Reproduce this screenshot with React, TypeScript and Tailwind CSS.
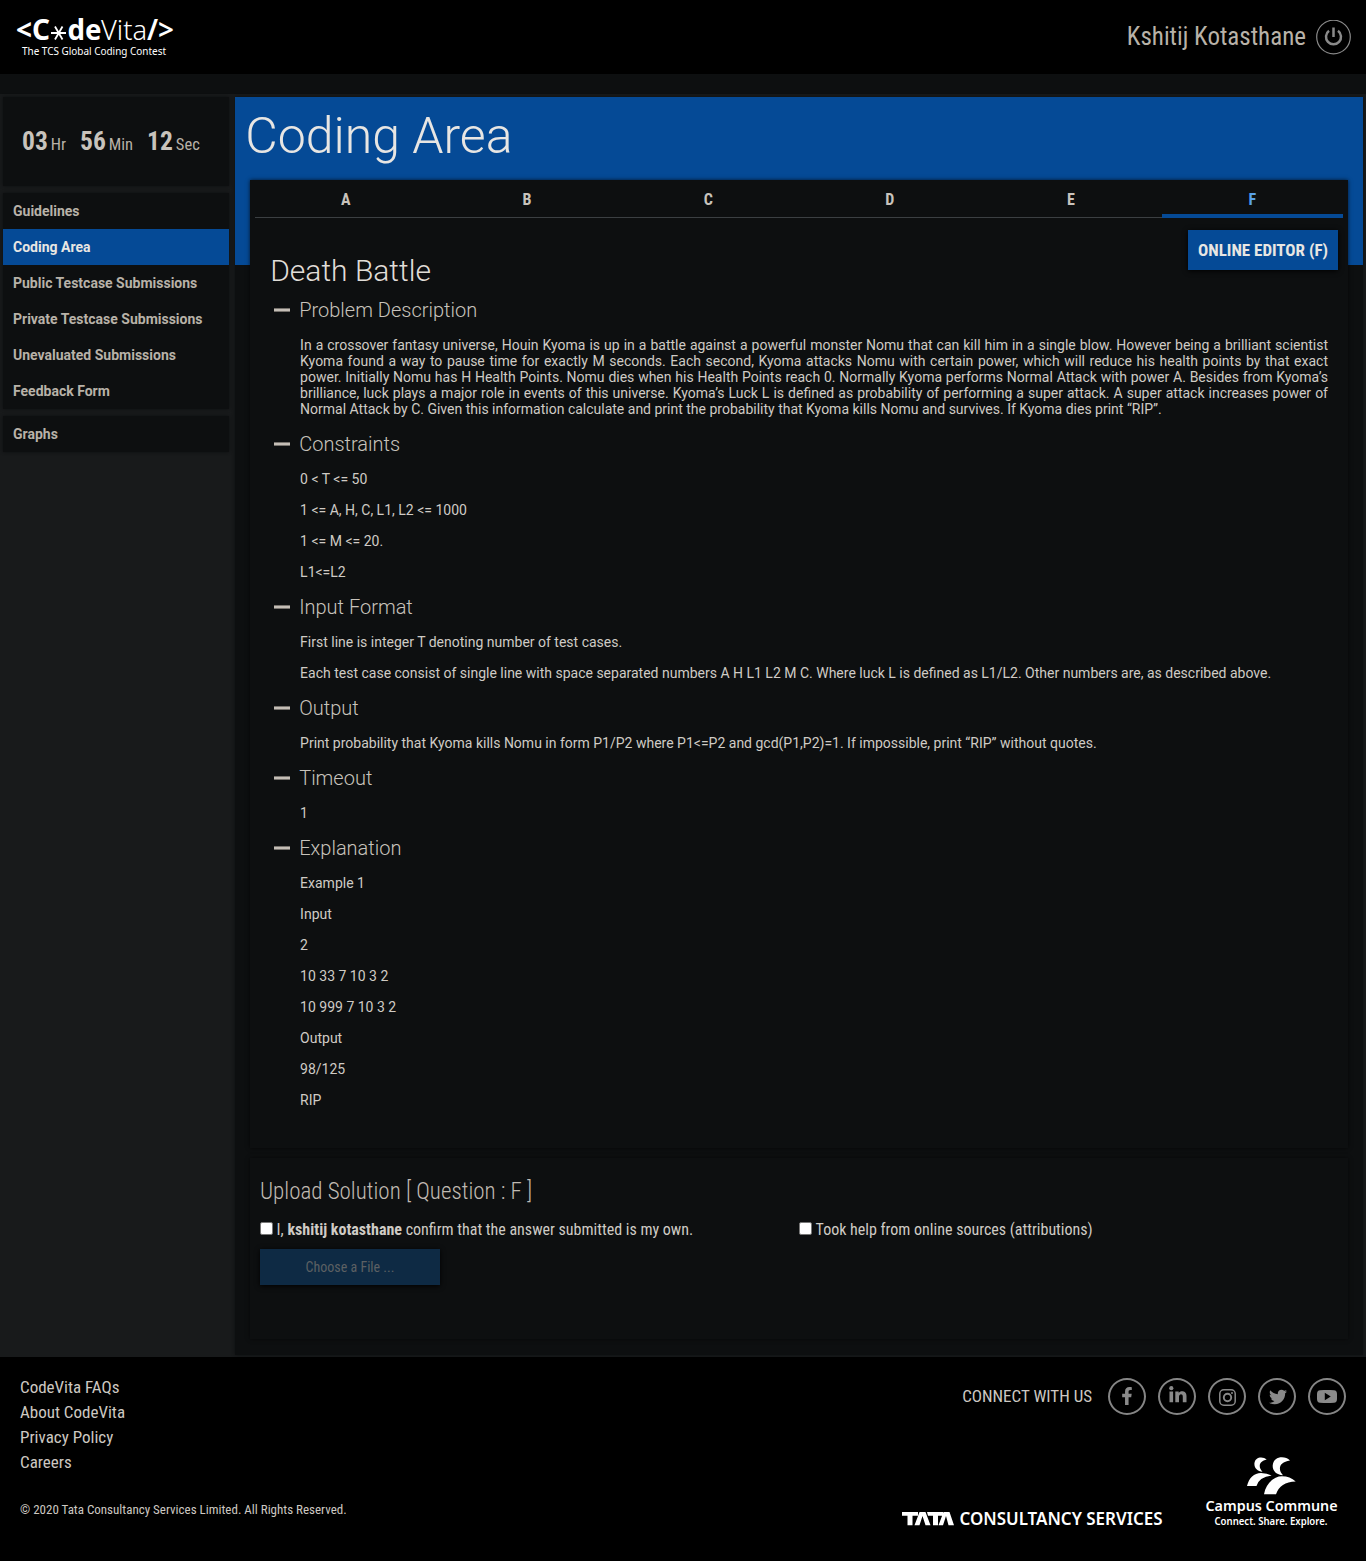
import React from "react";
import { FaFacebookF, FaTwitter } from "react-icons/fa";

const cond = "font-['Roboto_Condensed',Roboto,sans-serif] [font-stretch:75%]";

type Section = { title: string; lines: string[]; justify?: boolean };

const sections: Section[] = [
  {
    title: "Problem Description",
    justify: true,
    lines: [
      "In a crossover fantasy universe, Houin Kyoma is up in a battle against a powerful monster Nomu that can kill him in a single blow. However being a brilliant scientist Kyoma found a way to pause time for exactly M seconds. Each second, Kyoma attacks Nomu with certain power, which will reduce his health points by that exact power. Initially Nomu has H Health Points. Nomu dies when his Health Points reach 0. Normally Kyoma performs Normal Attack with power A. Besides from Kyoma’s brilliance, luck plays a major role in events of this universe. Kyoma’s Luck L is defined as probability of performing a super attack. A super attack increases power of Normal Attack by C. Given this information calculate and print the probability that Kyoma kills Nomu and survives. If Kyoma dies print “RIP”.",
    ],
  },
  { title: "Constraints", lines: ["0 < T <= 50", "1 <= A, H, C, L1, L2 <= 1000", "1 <= M <= 20.", "L1<=L2"] },
  {
    title: "Input Format",
    lines: [
      "First line is integer T denoting number of test cases.",
      "Each test case consist of single line with space separated numbers A H L1 L2 M C. Where luck L is defined as L1/L2. Other numbers are, as described above.",
    ],
  },
  { title: "Output", lines: ["Print probability that Kyoma kills Nomu in form P1/P2 where P1<=P2 and gcd(P1,P2)=1. If impossible, print “RIP” without quotes."] },
  { title: "Timeout", lines: ["1"] },
  { title: "Explanation", lines: ["Example 1", "Input", "2", "10 33 7 10 3 2", "10 999 7 10 3 2", "Output", "98/125", "RIP"] },
];

function Logo() {
  return (
    <svg width="160" height="60" viewBox="0 -10 160 60" fill="#fff" className="overflow-visible font-['Noto_Sans',sans-serif]">
      <text x="0" y="25" fontSize="28" fontWeight="700" textLength="16" lengthAdjust="spacingAndGlyphs">&lt;</text>
      <text x="16" y="25" fontSize="28" fontWeight="700" textLength="18" lengthAdjust="spacingAndGlyphs">C</text>
      <path d="M35 18h15M39 11.500l7.500 13M46.500 11.500l-7.500 13" stroke="#fff" strokeWidth="1.800" />
      <text x="51.500" y="25" fontSize="28" fontWeight="700" textLength="34" lengthAdjust="spacingAndGlyphs">de</text>
      <text x="85" y="25" fontSize="28" fontWeight="300" textLength="46" lengthAdjust="spacingAndGlyphs">Vita</text>
      <text x="131" y="25" fontSize="28" fontWeight="600" textLength="27" lengthAdjust="spacingAndGlyphs">/&gt;</text>
      <text x="6" y="40" fontSize="10.500" textLength="144" lengthAdjust="spacingAndGlyphs">The TCS Global Coding Contest</text>
    </svg>
  );
}

function Header() {
  return (
    <header className="flex h-[74px] items-start justify-between bg-black pl-4 pr-[15px]">
      <div className="pt-[5px]"><Logo /></div>
      <div className="flex items-center gap-2.5 pt-[19px]">
        <span className="text-[25px] leading-[34px] text-[#b8b2a8]">Kshitij Kotasthane</span>
        <svg width="35" height="35" viewBox="0 0 35 35" fill="none" stroke="#8a8a8a" className="mt-px">
          <circle cx="17.500" cy="17" r="16.800" strokeWidth="1.200" />
          <path d="M13 10.800a7.500 7.500 0 1 0 9 0M17.500 7.500v9.500" strokeWidth="2.500" />
        </svg>
      </div>
    </header>
  );
}

function Time({ n, unit }: { n: string; unit: string }) {
  return (
    <div className="flex items-baseline gap-[3px]">
      <span className="text-[25.500px] font-bold leading-[30px]">{n}</span>
      <span className="text-[16.500px] text-[#b8b2a8]">{unit}</span>
    </div>
  );
}

function Sidebar() {
  const items = ["Guidelines", "Coding Area", "Public Testcase Submissions", "Private Testcase Submissions", "Unevaluated Submissions", "Feedback Form"];
  const row = "flex h-9 items-center pl-2.5 text-[14px] font-bold font-[Roboto]";
  const card = "bg-[#0d0f10] shadow-[0_0_3px_#0d0f10]";
  return (
    <aside className="flex w-[226px] shrink-0 flex-col gap-[7px]">
      <div className={card + " flex h-[89px] items-center gap-[14px] pl-[19px]"}>
        <Time n="03" unit="Hr" />
        <Time n="56" unit="Min" />
        <Time n="12" unit="Sec" />
      </div>
      <nav className={card + " [font-stretch:100%]"}>
        {items.map((t) => (
          <div key={t} className={row + (t === "Coding Area" ? " bg-[#054a96] text-[#e8e6e3]" : " text-[#b8b2a8]")}>{t}</div>
        ))}
      </nav>
      <nav className={card + " [font-stretch:100%]"}>
        <div className={row + " text-[#b8b2a8]"}>Graphs</div>
      </nav>
    </aside>
  );
}

function Problem() {
  return (
    <section className="h-[968px] bg-[#0d0f10] px-[5px] shadow-[0_0_4px_rgba(0,0,0,0.700)]">
      <div className="grid h-[38px] grid-cols-6 border-b border-[#3b3f42]">
        {["A", "B", "C", "D", "E", "F"].map((t) => (
          <div key={t} className={"flex items-center justify-center text-[16px] font-bold" + (t === "F" ? " -mb-px border-b-4 border-[#054a96] pt-[5px] text-[#58a1e8]" : " pt-[2px]")}>{t}</div>
        ))}
      </div>
      <div className="flex justify-between pl-[15.200px] pr-[5px] pt-3 font-[Roboto] [font-stretch:100%]">
        <h2 className="pt-[23px] text-[30px] font-light leading-9 text-[#e0ddd8]">Death Battle</h2>
        <button className={cond + " h-10 w-[150px] bg-[#054a96] pt-px text-[17px] font-bold text-[#e8e6e3] shadow-[0_1px_5px_#000]"}>ONLINE EDITOR (F)</button>
      </div>
      <div className="mt-[9px] flex flex-col gap-[15px] pl-[19px] pr-[15px] font-[Roboto] [font-stretch:100%]">
        {sections.map((s) => (
          <div key={s.title} className="flex flex-col gap-[15px]">
            <h3 className="flex h-6 items-center gap-[9.200px] text-[20px] font-light leading-6 text-[#c8c3bc]">
              <span className="h-1 w-4 border-y border-[#75716c] bg-[#c4beb6]" />
              {s.title}
            </h3>
            {s.lines.map((l) => (
              <p key={l} className={"ml-[26.100px] text-[14px] leading-4 text-[#cfcbc5]" + (s.justify ? " text-justify" : "")}>{l}</p>
            ))}
          </div>
        ))}
      </div>
    </section>
  );
}

function Box() {
  return <span className="mr-[3.600px] inline-block size-[13px] rounded-[2px] border border-[#767676] bg-white" />;
}

function Upload() {
  return (
    <section className="mt-[10px] h-[181px] bg-[#0d0f10] px-2.5 pt-[19px] shadow-[0_0_4px_rgba(0,0,0,0.600)]">
      <h2 className="text-[23px] font-light leading-[30px] text-[#c0bab2]">Upload Solution [ Question : F ]</h2>
      <div className="mt-[13px] grid grid-cols-2 text-[16px] leading-5 text-[#cfcbc5]">
        <label><Box />I, <b>kshitij kotasthane</b> confirm that the answer submitted is my own.</label>
        <label><Box />Took help from online sources (attributions)</label>
      </div>
      <button className="mt-[9px] h-9 w-[180px] bg-[#0e2a44] text-[14px] text-[#5c6063] shadow-[0_1px_5px_#000]">Choose a File ...</button>
    </section>
  );
}

const social = [
  <FaFacebookF size={18} className="-mt-px" />,
  <svg width="18" height="17" viewBox="0 0 18 17" fill="currentColor" className="-mt-1 ml-px">
    <circle cx="2.300" cy="2.200" r="2.100" />
    <path d="M.5 5.500h3.600V16.300H.5zM6.300 5.500h3.400v1.400C11.300 4.300 17.500 4.600 17.500 10v6.300h-3.700v-5.500c0-3.500-3.800-3.100-3.800 0v5.500H6.300z" />
  </svg>,
  <svg width="17" height="17" viewBox="0 0 17 17" fill="none" stroke="currentColor" strokeWidth="1.500" className="mt-0.5">
    <rect x=".8" y=".8" width="15.400" height="15.400" rx="4" />
    <circle cx="8.500" cy="8.500" r="3.700" strokeWidth="1.900" />
    <circle cx="13" cy="4" r="1" fill="currentColor" stroke="none" />
  </svg>,
  <FaTwitter size={18} className="ml-0.5 mt-px" />,
  <svg width="20" height="13" viewBox="0 0 20 13" fill="currentColor">
    <path fillRule="evenodd" d="M3 .2Q10-.3 17 .2Q20 .4 20 4v5q0 3.600-3 3.800q-7 .4-14 0Q0 12.600 0 9V4Q0 .4 3 .2zM7.800 2.700v7.600l6-3.800z" />
  </svg>,
];

function Footer() {
  return (
    <footer className="flex h-[204px] justify-between bg-black pl-5 pr-5 text-[#cdc8c2]">
      <div className="pt-[18px]">
        {["CodeVita FAQs", "About CodeVita", "Privacy Policy", "Careers"].map((t) => (
          <div key={t} className="text-[17px] leading-[25px]">{t}</div>
        ))}
        <p className="mt-[27px] text-[13px] leading-4">© 2020 Tata Consultancy Services Limited. All Rights Reserved.</p>
      </div>
      <div className="flex flex-col items-end">
        <div className="mt-[21px] flex h-[38px] items-center gap-3">
          <span className="mr-1 text-[17px]">CONNECT WITH US</span>
          {social.map((icon, i) => (
            <span key={i} className="mb-px flex h-[37px] w-[38px] items-center justify-center rounded-[50%] border-2 border-[#858585] text-[#8a8a8a]">
              {icon}
            </span>
          ))}
        </div>
        <div className="mt-[38px] flex items-end gap-[41px] pr-[7px]">
          <svg width="262" height="18" viewBox="0 0 262 18" fill="#fff" className="overflow-visible font-['Noto_Sans',sans-serif]">
            <path d="M0 2h16v3.800h-5.500V15.300H5.500V5.800H0zM17.500 2h6l5 13.300h-5L20.500 6l-3 9.300h-5zM25 2h16v3.800h-5v9.500h-5V5.800H26zM41.500 2h6l4.500 13.300h-5.500l-2.500-9.300-3 9.300h-4.500z" />
            <text x="57.500" y="15" fontSize="17.500" fontWeight="600" textLength="203" lengthAdjust="spacingAndGlyphs">CONSULTANCY SERVICES</text>
          </svg>
          <svg width="134" height="74" viewBox="0 0 134 74" fill="#fff" className="overflow-visible font-['Noto_Sans',sans-serif]">
            <path d="M61.700 5.500C58 2 50 2.500 49.400 9.500C49.200 14 52.500 17 57.500 17.700C52.500 12.500 54.500 7 61.700 5.500zM42 32C44 24 49 19 56 19Q62 19 66.700 21.500Q54 23 51.500 32zM85 6.500C80 1.500 68.500 2 67.700 11.500C67.500 17 71.500 20.500 78 21.300C72.500 15.500 74 8 85 6.500zM59 40.300C61 29 69 22.300 77 22.300Q85 22.300 90.700 27.500Q75 28 71 40.300z" />
            <text x="0.500" y="56.500" fontSize="15" fontWeight="600" textLength="132" lengthAdjust="spacingAndGlyphs">Campus Commune</text>
            <text x="9.500" y="71" fontSize="10" fontWeight="600" textLength="113" lengthAdjust="spacingAndGlyphs">Connect. Share. Explore.</text>
          </svg>
        </div>
      </div>
    </footer>
  );
}

export default function App() {
  return (
    <div className={cond + " w-[1366px] bg-[#181a1b] text-[#c8c3bc]"}>
      <Header />
      <div className="h-5 bg-[#0d0f10]" />
      <div className="flex gap-1.5 px-[3px] pb-0.5 pt-[3px]">
        <Sidebar />
        <main className="h-[1258px] grow bg-[linear-gradient(#054a96_168px,#0d0f10_168px)] px-[15px] shadow-[0_0_3px_#0d0f10]">
          <h1 className="-ml-[4.800px] h-[83px] pt-2 font-[Roboto] text-[50px] font-light leading-[62px] text-[#e8e6e3] [font-stretch:100%]">Coding Area</h1>
          <Problem />
          <Upload />
        </main>
      </div>
      <Footer />
    </div>
  );
}
